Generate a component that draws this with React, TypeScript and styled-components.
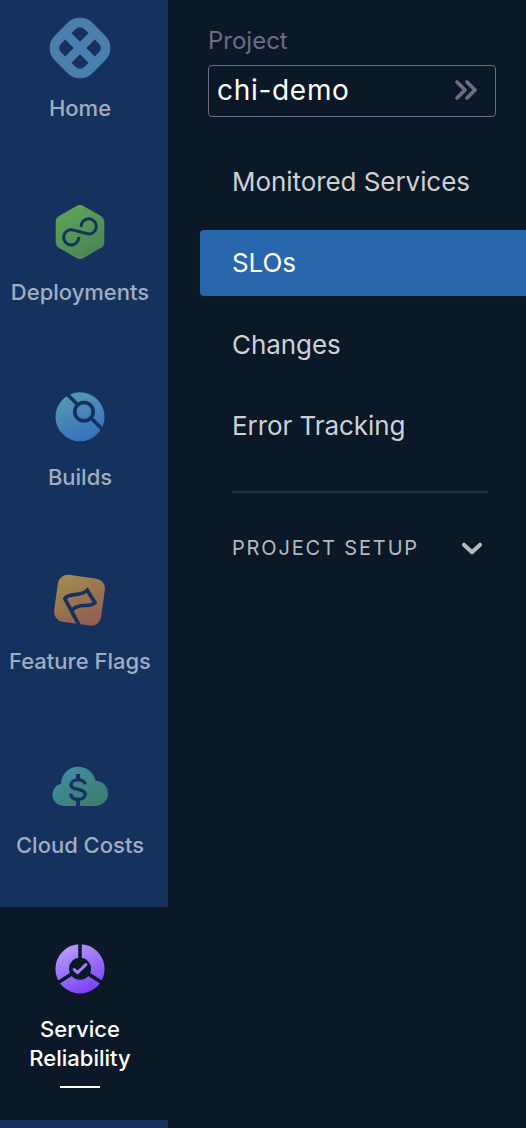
import React from 'react';
import styled, { createGlobalStyle } from 'styled-components';

const RAIL = '#15325f';
const PANEL = '#0b1828';

const GlobalStyle = createGlobalStyle`
  * { box-sizing: border-box; }
  body {
    margin: 0;
    background: ${PANEL};
    font-family: Inter, 'Liberation Sans', sans-serif;
  }
`;

const Shell = styled.div`
  display: flex;
  width: 526px;
  height: 1128px;
  overflow: hidden;
  background: ${PANEL};
`;

const Rail = styled.nav`
  flex: 0 0 168px;
  height: 1128px;
  overflow: hidden;
  background: ${RAIL};
`;

const RailList = styled.div`
  display: flex;
  flex-direction: column;
  margin-top: -14px;
`;

const RailItem = styled.a<{ $height: number; $active?: boolean }>`
  display: flex;
  flex: none;
  flex-direction: column;
  align-items: center;
  height: ${(p) => p.$height}px;
  padding: 30px 8px 0 0;
  background: ${(p) => (p.$active ? PANEL : 'transparent')};
  color: ${(p) => (p.$active ? '#ffffff' : '#a1adbf')};
`;

const RailIcon = styled.svg`
  display: block;
  flex: none;
  width: 64px;
  height: 64px;
`;

const RailLabel = styled.span`
  margin-top: 14px;
  font-size: 22px;
  font-weight: 500;
  line-height: 29px;
  text-align: center;
  white-space: pre-line;
`;

const ActiveMark = styled.span`
  width: 40px;
  height: 2px;
  margin-top: 13px;
  background: #ffffff;
`;

const Panel = styled.aside`
  flex: 1;
  min-width: 0;
  padding: 25px 0 0 32px;
`;

const ProjectLabel = styled.div`
  padding-left: 8px;
  color: #6b6d85;
  font-size: 24px;
  line-height: 32px;
`;

const ProjectSelect = styled.button`
  display: flex;
  align-items: center;
  justify-content: space-between;
  width: 288px;
  height: 52px;
  margin: 8px 0 0 8px;
  padding: 0 17px 2px 8px;
  border: 1px solid #6b6d85;
  border-radius: 4px;
  background: transparent;
  color: #ffffff;
  font: 400 28px/36px Inter, 'Liberation Sans', sans-serif;
  letter-spacing: 0.7px;
`;

const NavList = styled.div`
  display: flex;
  flex-direction: column;
  gap: 15.5px;
  margin-top: 31.5px;
`;

const NavItem = styled.a<{ $active?: boolean }>`
  display: flex;
  align-items: center;
  height: 66px;
  padding: 0 0 1px 32px;
  border-radius: 4px 0 0 4px;
  background: ${(p) => (p.$active ? '#2866ae' : 'transparent')};
  color: ${(p) => (p.$active ? '#ffffff' : '#ced1d4')};
  font-size: 26px;
  letter-spacing: -0.06px;
`;

const Divider = styled.hr`
  width: 256px;
  height: 2px;
  margin: 32px 0 0 32px;
  border: 0;
  background: #232f3e;
`;

const SetupRow = styled.div`
  display: flex;
  align-items: center;
  justify-content: space-between;
  width: 252px;
  height: 32px;
  margin: 39px 0 0 32px;
  color: #b5babf;
  font-size: 20px;
  letter-spacing: 1.85px;
`;

const HomeIcon = () => (
  <RailIcon viewBox="0 0 64 64">
    <g transform="rotate(45 32 32)">
      <rect x="5.4" y="5.4" width="53.2" height="53.2" rx="17.5" fill="#4a7fae" />
      <rect x="15.5" y="15.5" width="33" height="33" rx="6" fill={RAIL} />
      <path d="M32 12V52M12 32H52" stroke="#4a7fae" strokeWidth="9" />
    </g>
  </RailIcon>
);

const DeploymentsIcon = () => (
  <RailIcon viewBox="0 0 64 64" fill="none">
    <linearGradient id="deploy" gradientUnits="userSpaceOnUse" x1="18" y1="8" x2="46" y2="56">
      <stop stopColor="#5ca556" />
      <stop offset="1" stopColor="#4a8458" />
    </linearGradient>
    <path
      d="M32 12L49.3 22V42L32 52L14.7 42V22Z"
      fill="url(#deploy)"
      stroke="url(#deploy)"
      strokeWidth="14"
      strokeLinejoin="round"
    />
    <path
      d="M30.8 36.8A7.6 7.6 0 1 1 24.5 29.9L39.5 33.8A7.6 7.6 0 1 0 33.2 26.9"
      stroke={RAIL}
      strokeWidth="3"
    />
  </RailIcon>
);

const BuildsIcon = () => (
  <RailIcon viewBox="0 0 64 64" fill="none">
    <linearGradient id="builds" gradientUnits="userSpaceOnUse" x1="20" y1="10" x2="40" y2="56">
      <stop stopColor="#5797b0" />
      <stop offset="1" stopColor="#3371bf" />
    </linearGradient>
    <circle cx="32" cy="31.8" r="24.5" fill="url(#builds)" />
    <g stroke={RAIL} strokeWidth="3.7">
      <circle cx="36" cy="26.7" r="9.2" />
      <path d="M19 9L29.5 19.5M42.5 32.5L56 46" />
    </g>
  </RailIcon>
);

const FlagsIcon = () => (
  <RailIcon viewBox="0 0 64 64" fill="none">
    <linearGradient id="flags" gradientUnits="userSpaceOnUse" x1="16" y1="8" x2="48" y2="56">
      <stop stopColor="#a18a50" />
      <stop offset="1" stopColor="#925b52" />
    </linearGradient>
    <rect
      x="7.8"
      y="7.5"
      width="47.4"
      height="47.4"
      rx="10"
      fill="url(#flags)"
      transform="rotate(8 31.5 31.2)"
    />
    <path
      d="M32.6 59L16.8 29.6C22 23 32 28.5 39.2 21.3L47 33.7C40 40 33 32.5 24.5 40.6"
      stroke={RAIL}
      strokeWidth="3.7"
    />
  </RailIcon>
);

const CloudIcon = () => (
  <RailIcon viewBox="0 0 64 64" fill="none">
    <linearGradient id="cloud" gradientUnits="userSpaceOnUse" x1="22" y1="14" x2="44" y2="56">
      <stop stopColor="#418ca1" />
      <stop offset="1" stopColor="#3c7d6b" />
    </linearGradient>
    <path
      d="M15.3 53A11.3 11.3 0 0 1 13.1 30.7A17.3 17.3 0 0 1 47.4 27.8A12.6 12.6 0 0 1 47.4 53Z"
      fill="url(#cloud)"
    />
    <path
      d="M37 31.4C37 28.5 34 26.9 30 26.9C25.7 26.9 23 28.9 23 31.7C23 38.2 37.2 34.7 37.2 41.3C37.2 44.4 34.2 46.4 30 46.4C25.6 46.4 22.9 44.2 22.9 40.8"
      stroke={RAIL}
      strokeWidth="3.3"
    />
    <path d="M30 21V26M30 47V54" stroke={RAIL} strokeWidth="4" />
  </RailIcon>
);

const ReliabilityIcon = () => (
  <RailIcon viewBox="0 0 64 64" fill="none">
    <linearGradient id="reliability" gradientUnits="userSpaceOnUse" x1="20" y1="9" x2="42" y2="56">
      <stop stopColor="#b59bfb" />
      <stop offset="1" stopColor="#7a3ff5" />
    </linearGradient>
    <circle cx="32" cy="31.8" r="24.6" fill="url(#reliability)" />
    <circle cx="32" cy="31.8" r="11" fill={PANEL} />
    <path d="M32 31.8V5M32 31.8L9 46.2M32 31.8L55 46.2" stroke={PANEL} strokeWidth="3.5" />
    <path
      d="M26.2 32.6L29.6 35.6L37.8 27.6"
      stroke="#a17ffa"
      strokeWidth="3"
      strokeLinecap="round"
      strokeLinejoin="round"
    />
  </RailIcon>
);

const modules = [
  { label: 'Home', Icon: HomeIcon, height: 184 },
  { label: 'Deployments', Icon: DeploymentsIcon, height: 185 },
  { label: 'Builds', Icon: BuildsIcon, height: 184 },
  { label: 'Feature Flags', Icon: FlagsIcon, height: 184 },
  { label: 'Cloud Costs', Icon: CloudIcon, height: 184 },
  { label: 'Service\nReliability', Icon: ReliabilityIcon, height: 213, active: true },
];

const links = ['Monitored Services', 'SLOs', 'Changes', 'Error Tracking'];

export default function App() {
  return (
    <>
      <GlobalStyle />
      <Shell>
        <Rail>
          <RailList>
            {modules.map(({ label, Icon, height, active }) => (
              <RailItem key={label} $height={height} $active={active}>
                <Icon />
                <RailLabel>{label}</RailLabel>
                {active && <ActiveMark />}
              </RailItem>
            ))}
          </RailList>
        </Rail>
        <Panel>
          <ProjectLabel>Project</ProjectLabel>
          <ProjectSelect>
            chi-demo
            <svg width="24" height="24" viewBox="0 0 24 24" fill="none">
              <path
                d="M3 4L11 12L3 20M13 4L21 12L13 20"
                stroke="#6b6d85"
                strokeWidth="3.8"
                strokeLinecap="round"
                strokeLinejoin="round"
              />
            </svg>
          </ProjectSelect>
          <NavList>
            {links.map((link) => (
              <NavItem key={link} $active={link === 'SLOs'}>
                {link}
              </NavItem>
            ))}
          </NavList>
          <Divider />
          <SetupRow>
            PROJECT SETUP
            <svg width="24" height="24" viewBox="0 0 24 24" fill="none">
              <path
                d="M4 8.7L12 16.2L20 8.7"
                stroke="#b5babf"
                strokeWidth="4"
                strokeLinecap="round"
                strokeLinejoin="round"
              />
            </svg>
          </SetupRow>
        </Panel>
      </Shell>
    </>
  );
}
